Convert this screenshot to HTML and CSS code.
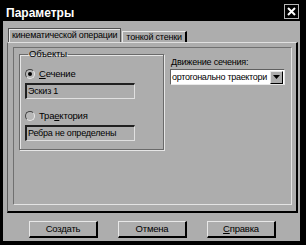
FILE: index.html
```html
<!DOCTYPE html>
<html>
<head>
<meta charset="utf-8">
<link rel="stylesheet" href="styles.css">
</head>
<body>
<div class="win">
  <div class="title">
    <span class="title-text">Параметры</span>
    <div class="close">
      <svg width="11" height="11" viewBox="0 0 11 11"><path d="M2 2 L9 9 M9 2 L2 9" stroke="#fff" stroke-width="2"/></svg>
    </div>
  </div>
  <div class="client">
    <div class="tabs">
      <div class="tab active">кинематической операции</div>
      <div class="tab">тонкой стенки</div>
    </div>
    <div class="page">
      <div class="inner">
        <fieldset class="group">
          <legend>Объекты</legend>
          <div class="radio-row">
            <span class="radio checked"></span>
            <span><u>С</u>ечение</span>
          </div>
          <div class="field">Эскиз 1</div>
          <div class="radio-row second">
            <span class="radio"></span>
            <span>Тра<u>е</u>ктория</span>
          </div>
          <div class="field">Ребра не определены</div>
        </fieldset>
        <div class="right">
          <div class="label"><u>Д</u>вижение сечения:</div>
          <div class="combo">
            <span class="combo-text">ортогонально траектори</span>
            <span class="combo-btn"><svg width="7" height="4" viewBox="0 0 7 4"><path d="M0 0 H7 L3.5 4 Z" fill="#000"/></svg></span>
          </div>
        </div>
      </div>
    </div>
    <div class="buttons">
      <div class="btn">Создать</div>
      <div class="btn">Отмена</div>
      <div class="btn"><u>С</u>правка</div>
    </div>
  </div>
</div>
</body>
</html>
```
FILE: styles.css
```css
* { box-sizing: border-box; }
html, body { margin: 0; padding: 0; }
body {
  width: 306px;
  height: 245px;
  background: #000;
  font-family: "Liberation Sans", Arial, sans-serif;
  font-size: 9px;
  letter-spacing: -0.2px;
  color: #000;
  overflow: hidden;
}
.win {
  width: 306px;
  height: 245px;
  display: flex;
  flex-direction: column;
  background: #000;
}
.title {
  height: 21px;
  display: flex;
  align-items: center;
  justify-content: space-between;
  padding: 0 7px 0 6px;
}
.title-text {
  color: #fff;
  font-weight: bold;
  font-size: 12px;
  letter-spacing: 0;
  margin-top: 4px;
}
.close {
  width: 15px;
  height: 15px;
  border: 1px solid #b8b8b8;
  background: #000;
  display: flex;
  align-items: center;
  justify-content: center;
  margin-top: 2px;
}
.client {
  flex: 1;
  margin: 0 6px 4px 3px;
  background: #adadad;
  display: flex;
  flex-direction: column;
  padding: 6px 2px 3px 4px;
}
.tabs {
  display: flex;
  align-items: flex-end;
  height: 15px;
  padding-left: 1px;
}
.tab {
  height: 11px;
  line-height: 10px;
  padding: 0 3px;
  border-top: 1px solid #e8e8e8;
  border-left: 1px solid #e8e8e8;
  border-right: 2px solid #000;
  font-size: 9px;
  margin-left: 1px;
}
.tab.active {
  height: 14px;
  line-height: 12px;
  border: 1px solid #505050;
  border-bottom: none;
  box-shadow: inset 1px 1px 0 #e8e8e8;
  padding: 0 3px;
  margin-left: 0;
}
.page {
  height: 171px;
  border-top: 1px solid #e0e0e0;
  border-left: 1px solid #606060;
  border-right: 2px solid #000;
  border-bottom: 2px solid #000;
  padding: 4px 4px 6px 5px;
  display: flex;
}
.inner {
  flex: 1;
  border-top: 1px solid #707070;
  border-left: 1px solid #707070;
  border-right: 1px solid #e4e4e4;
  border-bottom: 1px solid #e4e4e4;
  display: flex;
  align-items: flex-start;
  padding: 1px 0 0 5px;
}
.group {
  margin: 0;
  width: 145px;
  height: 101px;
  border: 1px solid #6a6a6a;
  box-shadow: inset 1px 1px 0 #e6e6e6, 1px 1px 0 #e6e6e6;
  padding: 9px 0 0 5px;
}
.group legend {
  padding: 0 1px;
  margin-left: 3px;
  font-size: 9.5px;
  line-height: 10px;
}
.radio-row {
  display: flex;
  align-items: center;
  gap: 4px;
  height: 11px;
  font-size: 9.5px;
}
.radio-row.second { margin-top: 11px; }
.radio {
  width: 10px;
  height: 10px;
  border-radius: 50%;
  border: 1px solid;
  border-color: #404040 #e8e8e8 #e8e8e8 #404040;
  background: #b8b8b8;
  position: relative;
  flex: none;
}
.radio.checked::after {
  content: "";
  position: absolute;
  left: 2px;
  top: 2px;
  width: 4px;
  height: 4px;
  border-radius: 50%;
  background: #000;
}
.field {
  margin-top: 4px;
  width: 110px;
  height: 16px;
  border-top: 2px solid #202020;
  border-left: 2px solid #202020;
  border-right: 1px solid #e0e0e0;
  border-bottom: 1px solid #e0e0e0;
  padding-left: 1px;
  line-height: 12px;
  font-size: 9px;
  white-space: nowrap;
}
.right {
  margin-left: 6px;
  padding-top: 8px;
}
.label {
  font-size: 9px;
  line-height: 10px;
  margin-left: 1px;
}
.combo {
  margin-top: 2px;
  width: 115px;
  height: 16px;
  background: #fff;
  border-top: 1px solid #606060;
  border-left: 1px solid #606060;
  border-right: 1px solid #e8e8e8;
  border-bottom: 1px solid #e8e8e8;
  display: flex;
  align-items: center;
  justify-content: space-between;
  padding-left: 1px;
}
.combo-text {
  font-size: 9px;
  letter-spacing: -0.3px;
  white-space: nowrap;
}
.combo-btn {
  width: 13px;
  height: 13px;
  background: #adadad;
  border-top: 1px solid #e8e8e8;
  border-left: 1px solid #e8e8e8;
  border-right: 1px solid #000;
  border-bottom: 1px solid #000;
  display: flex;
  align-items: center;
  justify-content: center;
  flex: none;
  margin-right: 1px;
}
.buttons {
  flex: 1;
  display: flex;
  justify-content: center;
  align-items: flex-end;
  gap: 20px;
}
.btn {
  width: 69px;
  height: 17px;
  border-top: 1px solid #e8e8e8;
  border-left: 1px solid #e8e8e8;
  border-right: 2px solid #000;
  border-bottom: 2px solid #000;
  text-align: center;
  line-height: 14px;
  font-size: 9.5px;
}
```
